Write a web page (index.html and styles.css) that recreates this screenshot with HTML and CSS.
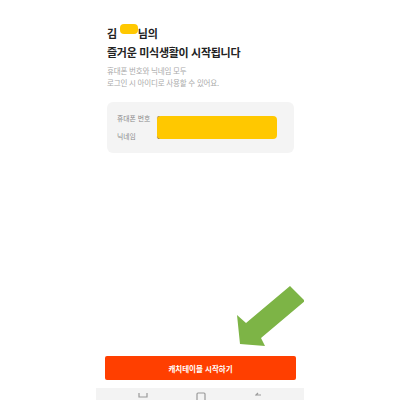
FILE: index.html
```html
<!DOCTYPE html>
<html lang="ko">
<head>
  <meta charset="UTF-8">
  <title>캐치테이블 가입 완료</title>
  <link rel="stylesheet" href="styles.css">
</head>
<body>
  <div class="screen">
    <div class="content">
      <h1 class="title">김<span class="mask-name">&nbsp;</span>님의<br>즐거운 미식생활이 시작됩니다</h1>
      <p class="desc">휴대폰 번호와 닉네임 모두<br>로그인 시 아이디로 사용할 수 있어요.</p>

      <div class="info-card">
        <div class="info-row"><span class="info-label">휴대폰 번호</span><span class="info-value">010-0000-0000</span></div>
        <div class="info-row"><span class="info-label">닉네임</span><span class="info-value">catch</span></div>
        <div class="mask-box"></div>
      </div>
    </div>

    <div class="spacer"></div>

    <button class="start-button">캐치테이블 시작하기</button>

    <div class="nav-bar">
      <svg class="nav-icon" width="14" height="12" viewBox="0 0 14 12"><path d="M3 5 V9 H11 V5" fill="none" stroke="#9a9a9a" stroke-width="1.2"/></svg>
      <svg class="nav-icon" width="14" height="12" viewBox="0 0 14 12"><rect x="3" y="5" width="8" height="9" rx="1" fill="none" stroke="#9a9a9a" stroke-width="1.2"/></svg>
      <svg class="nav-icon" width="14" height="12" viewBox="0 0 14 12"><path d="M10 7 L5 7 M7 5 L4.5 7.5" fill="none" stroke="#9a9a9a" stroke-width="1.2"/></svg>
    </div>

    <svg class="arrow" width="72" height="64" viewBox="236 284 72 64">
      <polygon points="290,286 305,301 261,338 265,346 240,344 237,315 246,323" fill="#7db446"/>
    </svg>
  </div>
</body>
</html>
```

FILE: styles.css
```css
body {
  margin: 0;
  background: #fff;
  font-family: "Noto Sans CJK KR", "Noto Sans", sans-serif;
}

.screen {
  position: relative;
  width: 208px;
  height: 400px;
  margin: 0 auto;
  display: flex;
  flex-direction: column;
  overflow: hidden;
}

.content {
  padding: 24px 10px 0 11px;
}

.title {
  margin: 0;
  font-size: 11px;
  line-height: 19px;
  font-weight: 700;
  color: #222;
  letter-spacing: -0.3px;
}

.mask-name {
  display: inline-block;
  width: 18px;
  height: 10px;
  margin: 0 0 -2px 3px;
  background: #ffc800;
  border-radius: 4px;
}

.desc {
  margin: 3px 0 0;
  font-size: 7.5px;
  line-height: 12px;
  color: #aaa;
  letter-spacing: -0.2px;
}

.info-card {
  position: relative;
  margin-top: 13px;
  padding: 7px 10px 8px;
  background: #f4f4f4;
  border-radius: 6px;
}

.info-row {
  display: flex;
  line-height: 18px;
  font-size: 6.8px;
}

.info-label {
  width: 40px;
  color: #888;
}

.info-value {
  color: #333;
}

.mask-box {
  position: absolute;
  left: 50px;
  top: 14px;
  width: 120px;
  height: 23px;
  background: #ffc800;
  border-radius: 4px;
}

.spacer {
  flex: 1;
}

.start-button {
  margin: 0 8px 8px 9px;
  height: 24px;
  border: none;
  border-radius: 2px;
  background: #ff3f00;
  color: #fff;
  font-family: inherit;
  font-size: 7.5px;
  font-weight: 700;
}

.nav-bar {
  height: 12px;
  background: #f3f3f3;
  display: flex;
  justify-content: space-between;
  padding: 0 39px 0 40px;
  overflow: hidden;
}

.arrow {
  position: absolute;
  left: 140px;
  top: 284px;
}
```
